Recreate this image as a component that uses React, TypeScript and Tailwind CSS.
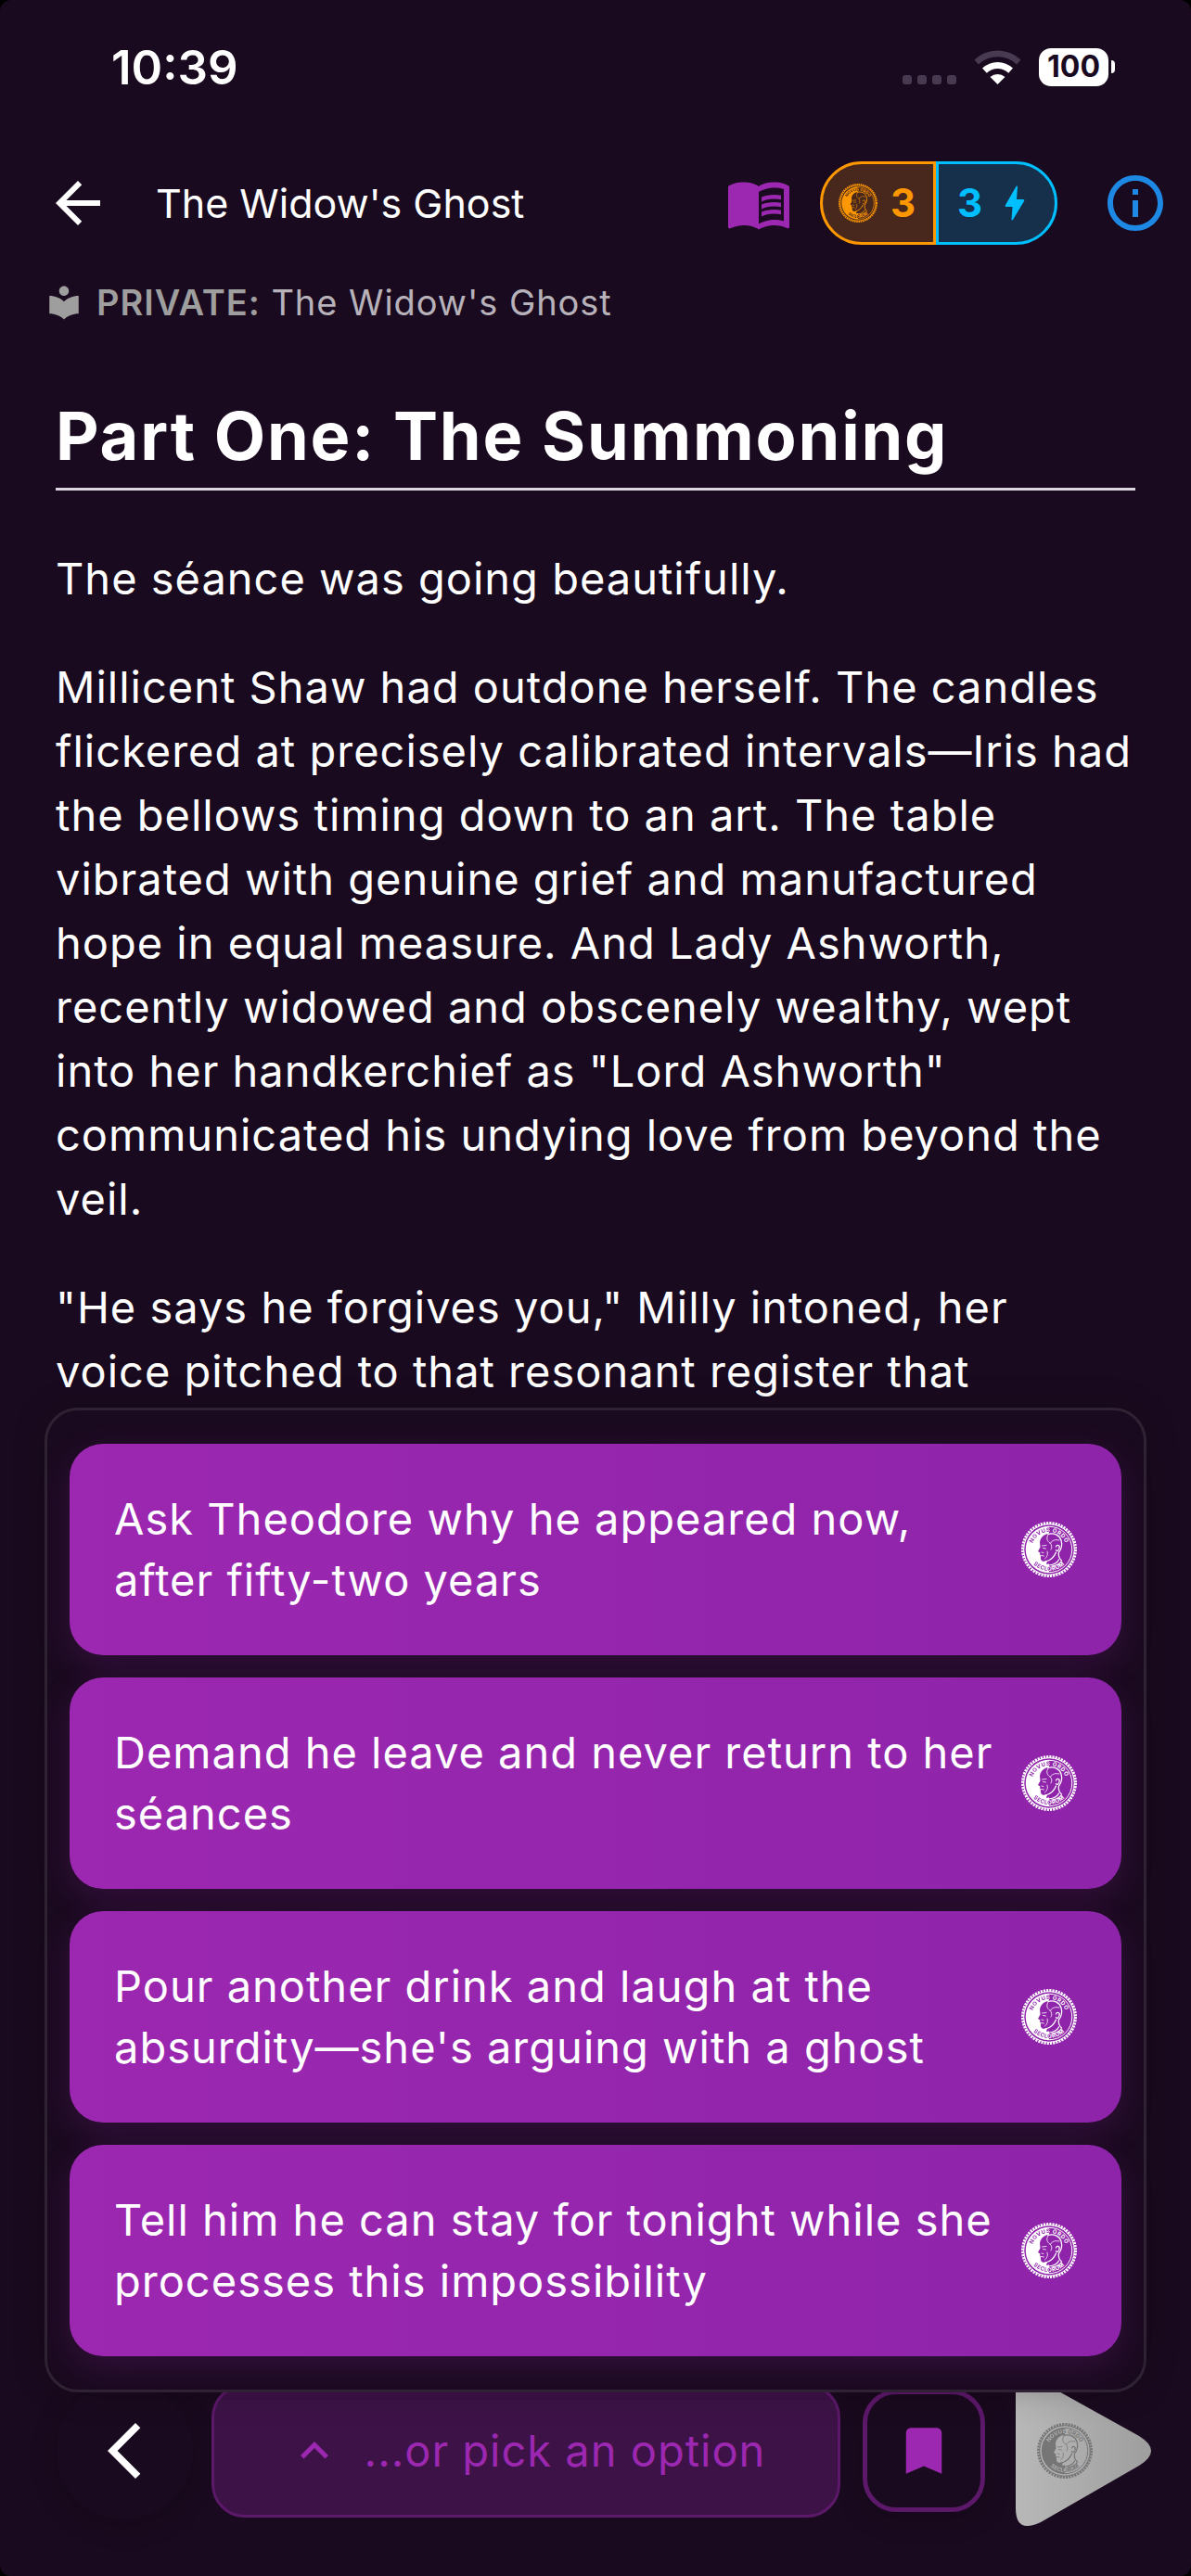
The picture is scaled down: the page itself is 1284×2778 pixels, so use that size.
import { useId, type ReactNode } from "react";
import {
  MdArrowBack,
  MdArrowBackIosNew,
  MdBookmark,
  MdExpandLess,
  MdInfoOutline,
  MdLocalLibrary,
  MdMenuBook,
} from "react-icons/md";

const choices = [
  "Ask Theodore why he appeared now, after fifty-two years",
  "Demand he leave and never return to her séances",
  "Pour another drink and laugh at the absurdity—she's arguing with a ghost",
  "Tell him he can stay for tonight while she processes this impossibility",
];

const paragraphs = [
  "The séance was going beautifully.",
  "Millicent Shaw had outdone herself. The candles flickered at precisely calibrated intervals—Iris had the bellows timing down to an art. The table vibrated with genuine grief and manufactured hope in equal measure. And Lady Ashworth, recently widowed and obscenely wealthy, wept into her handkerchief as \"Lord Ashworth\" communicated his undying love from beyond the veil.",
  "\"He says he forgives you,\" Milly intoned, her voice\u00a0pitched to that resonant register that",
];

function CoinMotto({ id, fill }: { id: string; fill: string }) {
  return (
    <g fill={fill} stroke="none" fontFamily="Inter, sans-serif" fontWeight="700" fontSize="12">
      <text>
        <textPath href={`#${id}t`} startOffset="50%" textAnchor="middle">
          NOVUS ORDO
        </textPath>
      </text>
      <text>
        <textPath href={`#${id}b`} startOffset="50%" textAnchor="middle">
          SECLORUM
        </textPath>
      </text>
    </g>
  );
}

function Coin({ className }: { className: string }) {
  const id = useId();
  return (
    <svg viewBox="0 0 120 120" className={className} fill="none" stroke="currentColor" aria-hidden="true">
      <defs>
        <path id={`${id}t`} d="M22 60A38 38 0 0 1 98 60" />
        <path id={`${id}b`} d="M14 60A46 46 0 0 0 106 60" />
        <mask id={`${id}m`} maskUnits="userSpaceOnUse" x="0" y="0" width="120" height="120">
          <rect width="60" height="120" fill="#fff" stroke="none" />
          <path
            d="M40 44C42 32 52 25 64 25V90L54 92L56 84C50 87 43 86 42 80L42 74L40 70L41 67L36 64L41 55Z"
            fill="#000"
            stroke="none"
          />
          <CoinMotto id={id} fill="#000" />
        </mask>
        <clipPath id={`${id}r`}>
          <rect x="60" y="0" width="60" height="120" />
        </clipPath>
      </defs>
      <circle cx="60" cy="60" r="57" strokeWidth="6" strokeDasharray="4.2 2.2" />
      <circle cx="60" cy="60" r="54.500" strokeWidth="2" />
      <circle cx="60" cy="60" r="50.500" fill="currentColor" stroke="none" mask={`url(#${id}m)`} />
      <g clipPath={`url(#${id}r)`}>
        <circle cx="60" cy="60" r="49.500" strokeWidth="2" />
        <CoinMotto id={id} fill="currentColor" />
      </g>
      <g strokeWidth="2.500" strokeLinecap="round" strokeLinejoin="round">
        <path d="M58 27C70 23 82 29 86 40C89 51 86 60 81 66C79 72 82 80 87 84" />
        <path d="M52 86C62 84 71 76 75 66" />
        <path d="M75 54C77 48 84 51 82 57C81 62 77 65 75 61" />
        <path d="M60 94C68 93 77 90 81 82M66 96C74 95 82 92 86 86" />
      </g>
      <g strokeWidth="1.600" strokeLinecap="round" strokeLinejoin="round">
        <path d="M45 52L54 51M47 57L53 58M43 73L49 74M44 66L48 67" />
        <path d="M58 28C53 36 56 42 62 46C66 50 67 56 64 60M63 46C67 40 73 38 82 40M56 64C58 70 56 76 51 80" />
      </g>
    </svg>
  );
}

function StatusBar() {
  return (
    <div className="flex h-36 shrink-0 items-center justify-between pr-[82px] pl-30">
      <span className="text-[51px] leading-none font-semibold">10:39</span>
      <div className="flex items-center gap-[19px]">
        <div className="flex gap-1.5 pt-7">
          {[0, 1, 2, 3].map((dot) => (
            <span key={dot} className="size-2.5 rounded-[3px] bg-[#483a50]" />
          ))}
        </div>
        <svg viewBox="0 0 51 37" className="h-[37px] w-[51px]" role="img" aria-label="Wi-Fi">
          <path d="M0.500 10.500A36 36 0 0 1 50.500 10.500L46 15.500A29.500 29.500 0 0 0 5 15.500Z" fill="#483a50" />
          <path d="M9 19.500A24 24 0 0 1 42 19.500L37.200 24.800A16.500 16.500 0 0 0 13.800 24.800Z" fill="#fff" />
          <path d="M17.500 29A12 12 0 0 1 33.500 29L25.500 37Z" fill="#fff" />
        </svg>
        <div className="flex items-center gap-[3px]">
          <span className="flex h-[41px] w-[75px] items-center justify-center rounded-[13px] bg-white text-[32px] leading-none font-bold text-[#1a0a1f]">
            100
          </span>
          <span className="h-3.5 w-1 rounded-r-full bg-white" />
        </div>
      </div>
    </div>
  );
}

function Header() {
  return (
    <header className="flex h-[150px] shrink-0 items-center pr-6 pl-12">
      <button type="button" aria-label="Back">
        <MdArrowBack className="size-18" />
      </button>
      <h1 className="flex-1 pl-12 text-[43px] leading-none">The Widow's Ghost</h1>
      <button type="button" aria-label="Reading mode" className="text-[#9c27b0]">
        <MdMenuBook className="size-18" />
      </button>
      <button
        type="button"
        aria-label="3 coins"
        className="ml-[30px] flex h-[90px] w-[125px] items-center gap-3.5 rounded-l-full border-3 border-[#ff9800] bg-[#48281c] pl-[17px] text-[#ff9800]"
      >
        <Coin className="size-[42px]" />
        <span className="text-[42px] leading-none font-bold">3</span>
      </button>
      <button
        type="button"
        aria-label="3 energy"
        className="flex h-[90px] w-[131px] items-center gap-6 rounded-r-full border-3 border-[#00bfff] bg-[#16304c] pl-5 text-[#00bfff]"
      >
        <span className="text-[42px] leading-none font-bold">3</span>
        <svg viewBox="0 0 22 38" className="h-[38px] w-[22px]" fill="currentColor" aria-hidden="true">
          <path d="M12.500 1Q14 0 14 1.500L13 15H20Q22 15 21 17L9 37Q7.500 38 7.500 36.500L8.500 23H2Q0 23 1 21Z" />
        </svg>
      </button>
      <button type="button" aria-label="Information" className="ml-12 text-[#1e88e5]">
        <MdInfoOutline className="size-18" />
      </button>
    </header>
  );
}

function Choice({ children }: { children: ReactNode }) {
  return (
    <button
      type="button"
      className="flex items-center gap-4 rounded-[36px] bg-linear-to-r from-[#9c27b0] to-[#8e24aa] p-12 text-left text-[47px] leading-[66px] tracking-[1px] shadow-[0_12px_36px_rgba(156,39,176,0.2)]"
    >
      <span className="flex-1">{children}</span>
      <Coin className="size-15 shrink-0" />
    </button>
  );
}

function BottomBar() {
  return (
    <nav className="flex h-42 shrink-0 items-center pr-[42px] pl-15">
      <button
        type="button"
        aria-label="Previous"
        className="flex size-37 items-center justify-center rounded-full shadow-[0_6px_30px_rgba(0,0,0,0.2)]"
      >
        <MdArrowBackIosNew className="size-18" />
      </button>
      <button
        type="button"
        className="ml-5 flex h-36 flex-1 items-center justify-center gap-6 rounded-[36px] border-3 border-[#5c1869] bg-[#3d1347] text-[47px] tracking-[1px] text-[#9c27b0]"
      >
        <MdExpandLess className="size-15" />
        ...or pick an option
      </button>
      <button
        type="button"
        aria-label="Bookmark"
        className="ml-6 flex size-33 items-center justify-center rounded-[36px] border-5 border-[#5c1869] text-[#9c27b0] shadow-[0_6px_30px_rgba(0,0,0,0.2)]"
      >
        <MdBookmark className="size-[66px]" />
      </button>
      <button type="button" aria-label="Continue" className="relative ml-8 text-[#767676]">
        <svg viewBox="0 0 148 168" className="h-42 w-37" aria-hidden="true">
          <defs>
            <linearGradient id="play" x1="0" x2="1" y1="0" y2="0">
              <stop offset="0" stopColor="#b8b8b8" />
              <stop offset="1" stopColor="#9e9e9e" />
            </linearGradient>
          </defs>
          <path d="M1 22Q1 -4 26 8L134 68Q160 84 134 100L28 161Q1 174 1 146Z" fill="url(#play)" />
        </svg>
        <Coin className="absolute top-[54px] left-6 size-15" />
      </button>
    </nav>
  );
}

export default function App() {
  return (
    <div className="bg-black">
      <div className="flex h-screen flex-col overflow-hidden rounded-xl bg-[#1a0a1f] pb-[51px] font-[Inter,sans-serif] text-white">
        <StatusBar />
        <Header />
        <p className="flex h-16 shrink-0 items-center gap-3.5 pl-12 text-[38px] leading-none tracking-wide text-white/70">
          <MdLocalLibrary className="size-[42px] text-[#9e9e9e]" />
          <span>
            <strong className="font-semibold text-[#9e9e9e]">PRIVATE:</strong> The Widow's Ghost
          </span>
        </p>
        <main className="min-h-0 flex-1 overflow-hidden px-15 pt-[62px]">
          <h2 className="border-b-3 border-[#dcd6e0] pb-1.5 text-[72px] leading-[100px] font-bold tracking-wide">
            Part One: The Summoning
          </h2>
          <div className="flex flex-col gap-12 pt-15 text-[47px] leading-[69px] tracking-[1px]">
            {paragraphs.map((paragraph) => (
              <p key={paragraph}>{paragraph}</p>
            ))}
          </div>
        </main>
        <section
          aria-label="Story choices"
          className="relative z-10 mx-12 -mb-[21px] flex shrink-0 flex-col gap-6 rounded-[36px] border-3 border-[#2f2333] bg-[#1a0a1f] px-6 py-9 shadow-[0_0_36px_rgba(0,0,0,0.2)]"
        >
          {choices.map((choice) => (
            <Choice key={choice}>{choice}</Choice>
          ))}
        </section>
        <BottomBar />
      </div>
    </div>
  );
}
